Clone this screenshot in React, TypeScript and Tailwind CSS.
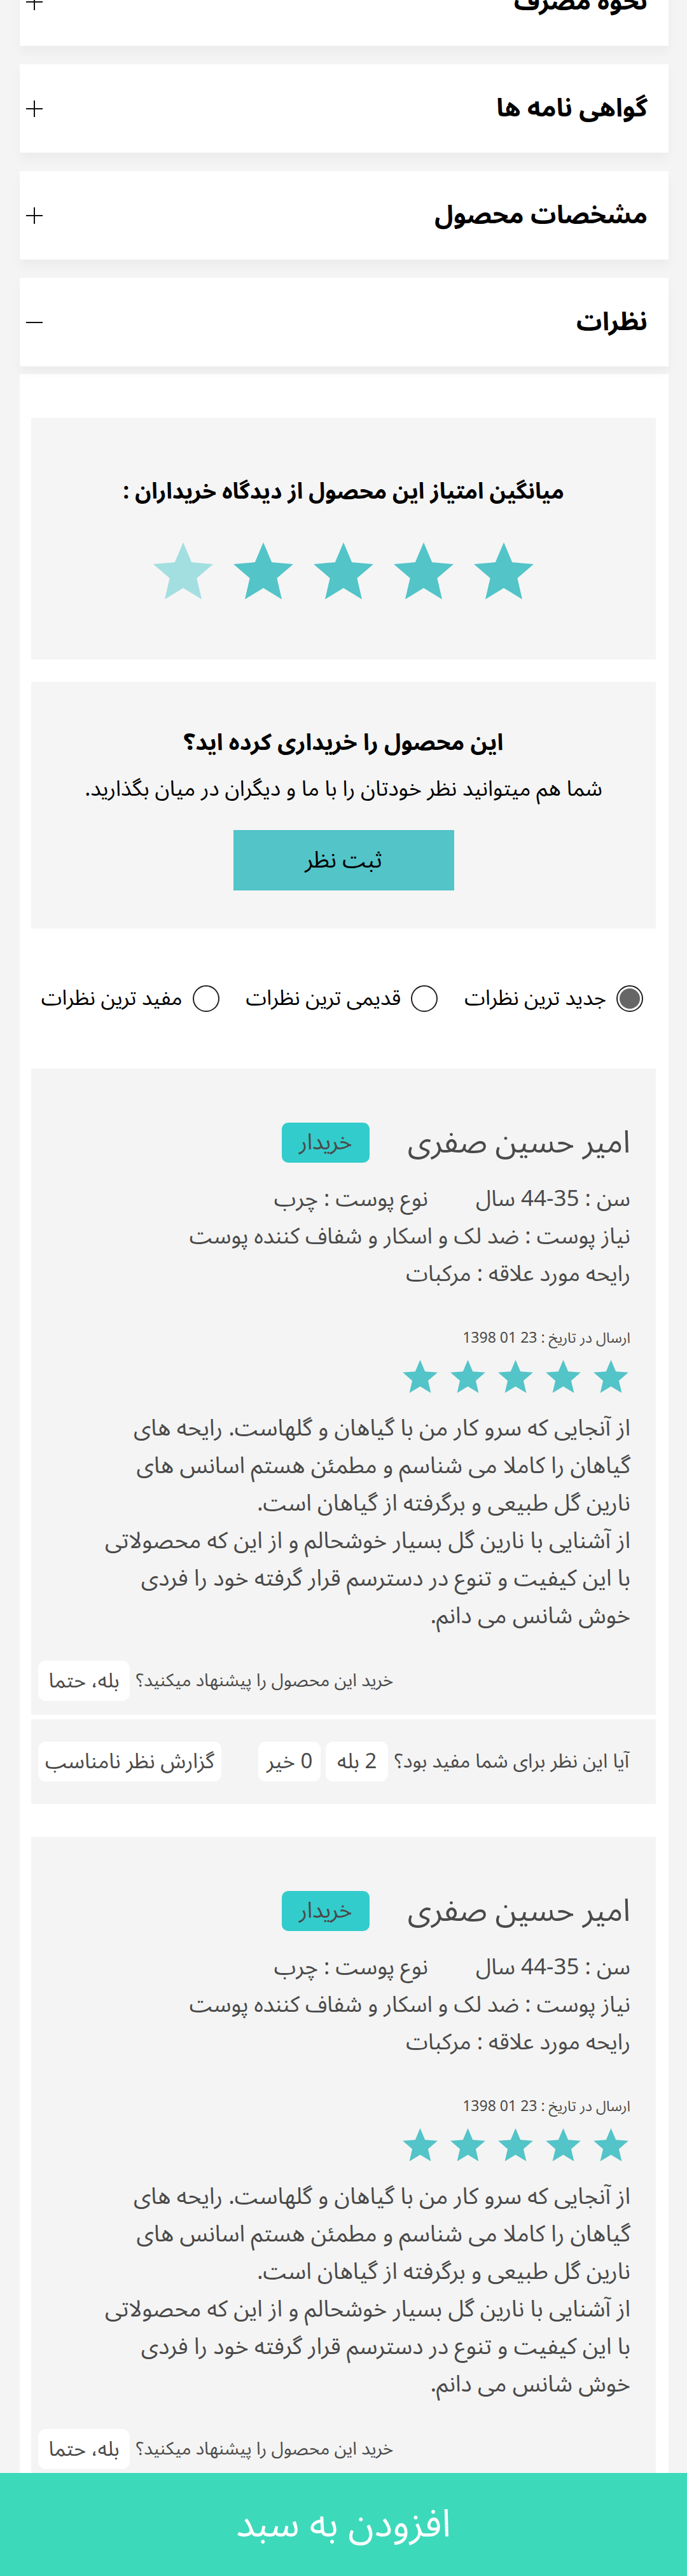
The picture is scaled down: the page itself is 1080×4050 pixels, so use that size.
const accordionItems = [
  { title: "نحوه مصرف", open: false },
  { title: "گواهی نامه ها", open: false },
  { title: "مشخصات محصول", open: false },
  { title: "نظرات", open: true },
];

const reviewLines = [
  "از آنجایی که سرو کار من با گیاهان و گلهاست. رایحه های",
  "گیاهان را کاملا می شناسم و مطمئن هستم اسانس های",
  "نارین گل طبیعی و برگرفته از گیاهان است.",
  "از آشنایی با نارین گل بسیار خوشحالم و از این که محصولاتی",
  "با این کیفیت و تنوع در دسترسم قرار گرفته خود را فردی",
  "خوش شانس می دانم.",
];

const sortOptions = ["جدید ترین نظرات", "قدیمی ترین نظرات", "مفید ترین نظرات"];

const Star = ({ className }: { className: string }) => (
  <svg viewBox="2 2 20 19" className={className} fill="currentColor">
    <path d="M12 17.27L18.18 21l-1.64-7.03L22 9.24l-7.19-.61L12 2 9.19 8.63 2 9.24l5.46 4.73L5.82 21z" />
  </svg>
);

const PlusIcon = ({ open }: { open: boolean }) => (
  <svg viewBox="0 0 26 26" className="w-[26px] h-[26px]" stroke="#111" strokeWidth={2}>
    <line x1="0" y1="13" x2="26" y2="13" />
    {!open && <line x1="13" y1="0" x2="13" y2="26" />}
  </svg>
);

const Review = () => (
  <div className="flex flex-col gap-[7px]">
    <div className="bg-[#f4f4f4] pr-[40px] pl-[11px] pt-[85px] pb-[22px] text-[#4a4a4a]">
      <div className="flex items-center gap-[60px] h-[63px]">
        <span className="text-[49px] leading-none">امیر حسین صفری</span>
        <span className="bg-[#33cccc] rounded-[10px] h-[63px] w-[138px] flex items-center justify-center text-[35px]">
          خریدار
        </span>
      </div>
      <div className="mt-[28px] text-[35px] leading-[59px]">
        <div className="flex gap-[75px]">
          <span>سن : 35-44 سال</span>
          <span>نوع پوست : چرب</span>
        </div>
        <div>نیاز پوست : ضد لک و اسکار و شفاف کننده پوست</div>
        <div>رایحه مورد علاقه : مرکبات</div>
      </div>
      <div className="mt-[54px] text-[23px] leading-[34px]">ارسال در تاریخ : 23 01 1398</div>
      <div className="mt-[17px] flex gap-[20px] pr-[3px] text-[#53c4c8]">
        {[0, 1, 2, 3, 4].map((i) => (
          <Star key={i} className="w-[55px] h-[52px]" />
        ))}
      </div>
      <div className="mt-[27px] text-[36px] leading-[59px] whitespace-nowrap">
        {reviewLines.map((line, i) => (
          <div key={i}>{line}</div>
        ))}
      </div>
      <div className="mt-[40px] flex justify-end items-center gap-[10px]">
        <span className="text-[28px]">خرید این محصول را پیشنهاد میکنید؟</span>
        <span className="bg-white rounded-[12px] h-[63px] w-[144px] flex items-center justify-center text-[32px]">
          بله، حتما
        </span>
      </div>
    </div>
    <div className="bg-[#f4f4f4] h-[133px] pr-[42px] pl-[11px] flex items-center justify-between text-[#4a4a4a]">
      <div className="flex items-center gap-[8px]">
        <span className="text-[31px] ml-[2px]">آیا این نظر برای شما مفید بود؟</span>
        <span className="bg-white rounded-[12px] h-[63px] w-[98px] flex items-center justify-center text-[33px]">
          2 بله
        </span>
        <span className="bg-white rounded-[12px] h-[63px] w-[98px] flex items-center justify-center text-[33px]">
          0 خیر
        </span>
      </div>
      <span className="bg-white rounded-[12px] h-[63px] w-[288px] flex items-center justify-center text-[33px]">
        گزارش نظر نامناسب
      </span>
    </div>
  </div>
);

export default function App() {
  return (
    <div
      dir="rtl"
      className="w-[1080px] h-[4050px] overflow-hidden bg-[#f4f4f4] flex flex-col [font-family:'Noto_Sans_Arabic','Vazirmatn','DejaVu_Sans',sans-serif]"
    >
      <div className="h-[3888px] overflow-hidden pr-[29px] pl-[31px]">
        <div className="-mt-[67px] flex flex-col gap-[29px]">
          {accordionItems.map((item) => (
            <div
              key={item.title}
              className="h-[139px] bg-white flex items-center justify-between pr-[33px] pl-[10px] shadow-[0_10px_14px_rgba(0,0,0,0.035)]"
            >
              <span className="text-[40px] font-bold text-black">{item.title}</span>
              <PlusIcon open={item.open} />
            </div>
          ))}
        </div>

        <div className="mt-[12px] bg-white pr-[20px] pl-[18px] pt-[69px]">
          <div className="bg-[#f5f5f5] h-[380px] flex flex-col items-center pt-[96px]">
            <h3 className="text-[35px] leading-[40px] font-bold text-black">
              میانگین امتیاز این محصول از دیدگاه خریداران :
            </h3>
            <div className="mt-[59px] flex gap-[32px]">
              {[0, 1, 2, 3, 4].map((i) => (
                <Star
                  key={i}
                  className={`w-[94px] h-[91px] ${i === 4 ? "text-[#a3dfe0]" : "text-[#53c4c8]"}`}
                />
              ))}
            </div>
          </div>

          <div className="mt-[35px] bg-[#f5f5f5] h-[388px] flex flex-col items-center pt-[76px]">
            <h3 className="text-[36px] leading-[40px] font-bold text-black">این محصول را خریداری کرده اید؟</h3>
            <p className="mt-[32px] text-[34px] leading-[40px] text-black">
              شما هم میتوانید نظر خودتان را با ما و دیگران در میان بگذارید.
            </p>
            <button className="mt-[45px] w-[347px] h-[95px] bg-[#53c4c8] text-black text-[36px]">
              ثبت نظر
            </button>
          </div>

          <div className="h-[220px] flex items-center gap-[42px] pr-[20px] text-black">
            {sortOptions.map((opt, i) => (
              <label key={opt} className="flex items-center gap-[16px]">
                <span className="w-[42px] h-[42px] rounded-full border-[2px] border-[#222] flex items-center justify-center">
                  {i === 0 && <span className="w-[32px] h-[32px] rounded-full bg-[#666]" />}
                </span>
                <span className="text-[33px] leading-[56px]">{opt}</span>
              </label>
            ))}
          </div>

          <div className="flex flex-col gap-[52px]">
            <Review />
            <Review />
          </div>
        </div>
      </div>

      <div className="h-[162px] bg-[#3dd9bb] flex items-center justify-center text-white text-[60px]">
        افزودن به سبد
      </div>
    </div>
  );
}
